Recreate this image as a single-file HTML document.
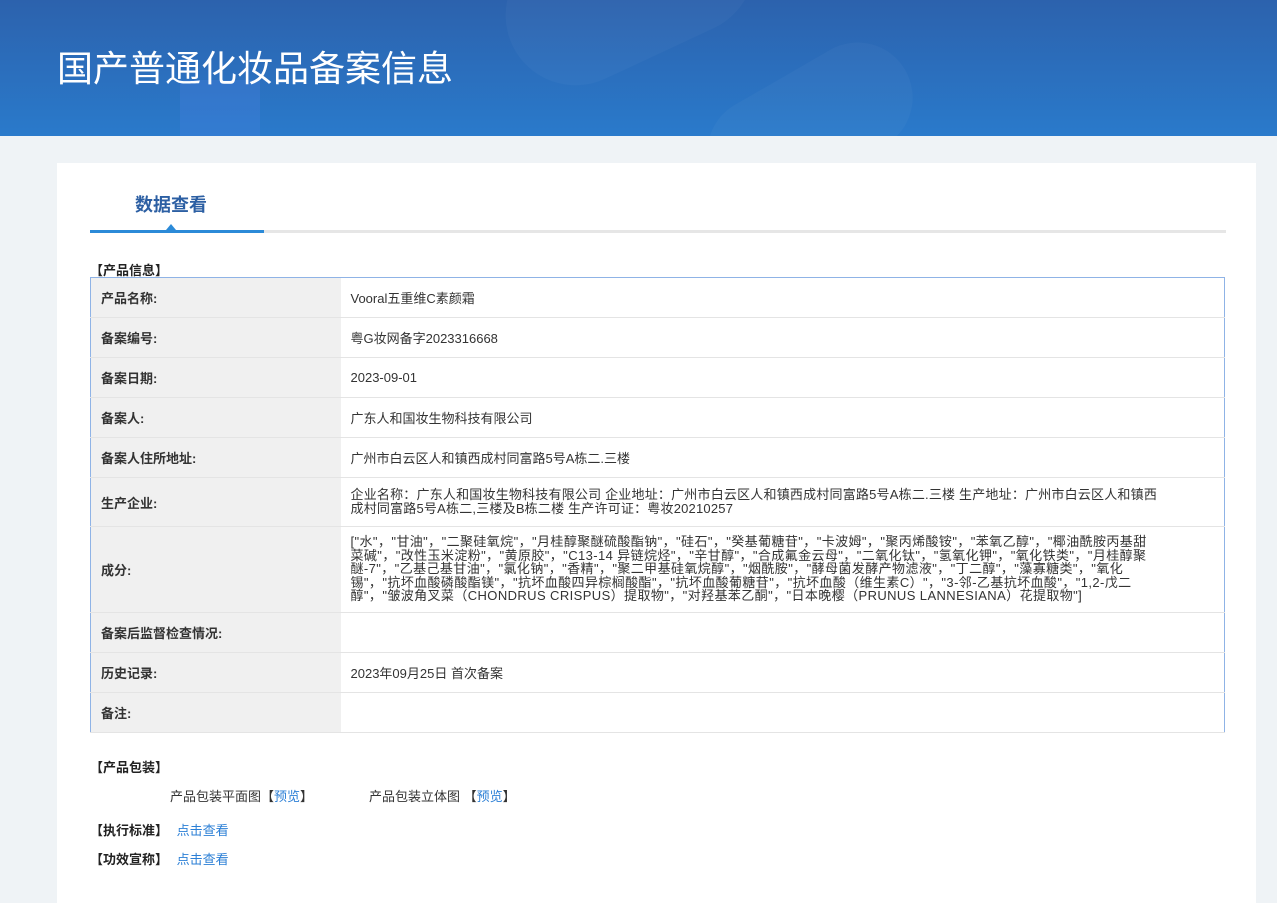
<!DOCTYPE html>
<html><head><meta charset="utf-8"><style>
*{margin:0;padding:0;box-sizing:border-box}
body{width:1277px;height:891px;overflow:hidden;background:#eff3f6;font-family:"Liberation Sans","Noto Sans CJK SC",sans-serif;color:#333;font-size:13px}
.hd{height:136px;background:linear-gradient(180deg,#2c62ad 0%,#2a7acb 100%);position:relative;overflow:hidden}
.hd h1{position:absolute;left:57px;top:40px;font-size:36px;font-weight:normal;color:#fff}
.card{position:absolute;left:57px;top:163px;width:1199px;height:740px;background:#fff}
.tab{position:absolute;left:78px;top:28px;font-size:18px;font-weight:bold;color:#2c5fa3}
.line{position:absolute;left:33px;top:67px;width:1136px;height:3px;background:#e6e6e6}
.line i{position:absolute;left:0;top:0;width:174px;height:3px;background:#2b8ad8}
.tri{position:absolute;left:109px;top:61px;width:0;height:0;border-left:5px solid transparent;border-right:5px solid transparent;border-bottom:6px solid #2b8ad8}
.sec{position:absolute;left:33px;font-weight:bold;font-size:13px;color:#222}
table{position:absolute;left:33px;top:114px;width:1135px;border-collapse:collapse;border:1px solid #8fb3e6}
td{border-bottom:1px solid #e4e4e4;vertical-align:middle;padding:0 10px;font-size:13px}
td.l{width:250px;background:#f0f0f0;font-weight:bold;color:#333}
td.v{color:#333}
.ing{font-size:13px;line-height:13.5px;padding-top:8px;padding-bottom:8px;vertical-align:top;letter-spacing:0.4px}
a{color:#2b7fd6;text-decoration:none}
</style></head><body>
<div class="hd">
<div style="position:absolute;left:180px;top:80px;width:80px;height:70px;background:rgba(80,130,230,.25)"></div>
<div style="position:absolute;left:500px;top:-80px;width:260px;height:140px;border-radius:70px;background:rgba(255,255,255,.03);transform:rotate(-25deg)"></div>
<div style="position:absolute;left:700px;top:70px;width:220px;height:110px;border-radius:55px;background:rgba(255,255,255,.03);transform:rotate(-30deg)"></div>
<h1>国产普通化妆品备案信息</h1></div>
<div class="card">
<div class="tab">数据查看</div>
<div class="line"><i></i></div><div class="tri"></div>
<div class="sec" style="top:97px">【产品信息】</div>
<table>
<tr style="height:40px"><td class="l">产品名称:</td><td class="v">Vooral五重维C素颜霜</td></tr>
<tr style="height:40px"><td class="l">备案编号:</td><td class="v">粤G妆网备字2023316668</td></tr>
<tr style="height:40px"><td class="l">备案日期:</td><td class="v">2023-09-01</td></tr>
<tr style="height:40px"><td class="l">备案人:</td><td class="v">广东人和国妆生物科技有限公司</td></tr>
<tr style="height:40px"><td class="l">备案人住所地址:</td><td class="v">广州市白云区人和镇西成村同富路5号A栋二.三楼</td></tr>
<tr style="height:49px"><td class="l">生产企业:</td><td class="v" style="line-height:14px;letter-spacing:0.2px">企业名称：广东人和国妆生物科技有限公司 企业地址：广州市白云区人和镇西成村同富路5号A栋二.三楼 生产地址：广州市白云区人和镇西<br>成村同富路5号A栋二,三楼及B栋二楼 生产许可证：粤妆20210257</td></tr>
<tr style="height:86px"><td class="l">成分:</td><td class="v ing">["水"，"甘油"，"二聚硅氧烷"，"月桂醇聚醚硫酸酯钠"，"硅石"，"癸基葡糖苷"，"卡波姆"，"聚丙烯酸铵"，"苯氧乙醇"，"椰油酰胺丙基甜<br>菜碱"，"改性玉米淀粉"，"黄原胶"，"C13-14 异链烷烃"，"辛甘醇"，"合成氟金云母"，"二氧化钛"，"氢氧化钾"，"氧化铁类"，"月桂醇聚<br>醚-7"，"乙基己基甘油"，"氯化钠"，"香精"，"聚二甲基硅氧烷醇"，"烟酰胺"，"酵母菌发酵产物滤液"，"丁二醇"，"藻寡糖类"，"氧化<br>锡"，"抗坏血酸磷酸酯镁"，"抗坏血酸四异棕榈酸酯"，"抗坏血酸葡糖苷"，"抗坏血酸（维生素C）"，"3-邻-乙基抗坏血酸"，"1,2-戊二<br>醇"，"皱波角叉菜（CHONDRUS CRISPUS）提取物"，"对羟基苯乙酮"，"日本晚樱（PRUNUS LANNESIANA）花提取物"]</td></tr>
<tr style="height:40px"><td class="l">备案后监督检查情况:</td><td class="v"></td></tr>
<tr style="height:40px"><td class="l">历史记录:</td><td class="v">2023年09月25日 首次备案</td></tr>
<tr style="height:40px"><td class="l">备注:</td><td class="v"></td></tr>
</table>
<div class="sec" style="top:594px">【产品包装】</div>
<div style="position:absolute;left:113px;top:623px">产品包装平面图【<a>预览</a>】</div>
<div style="position:absolute;left:312px;top:623px">产品包装立体图 【<a>预览</a>】</div>
<div class="sec" style="top:657px">【执行标准】 <a style="font-weight:normal;margin-left:5px">点击查看</a></div>
<div class="sec" style="top:686px">【功效宣称】 <a style="font-weight:normal;margin-left:5px">点击查看</a></div>
</div>
</body></html>
